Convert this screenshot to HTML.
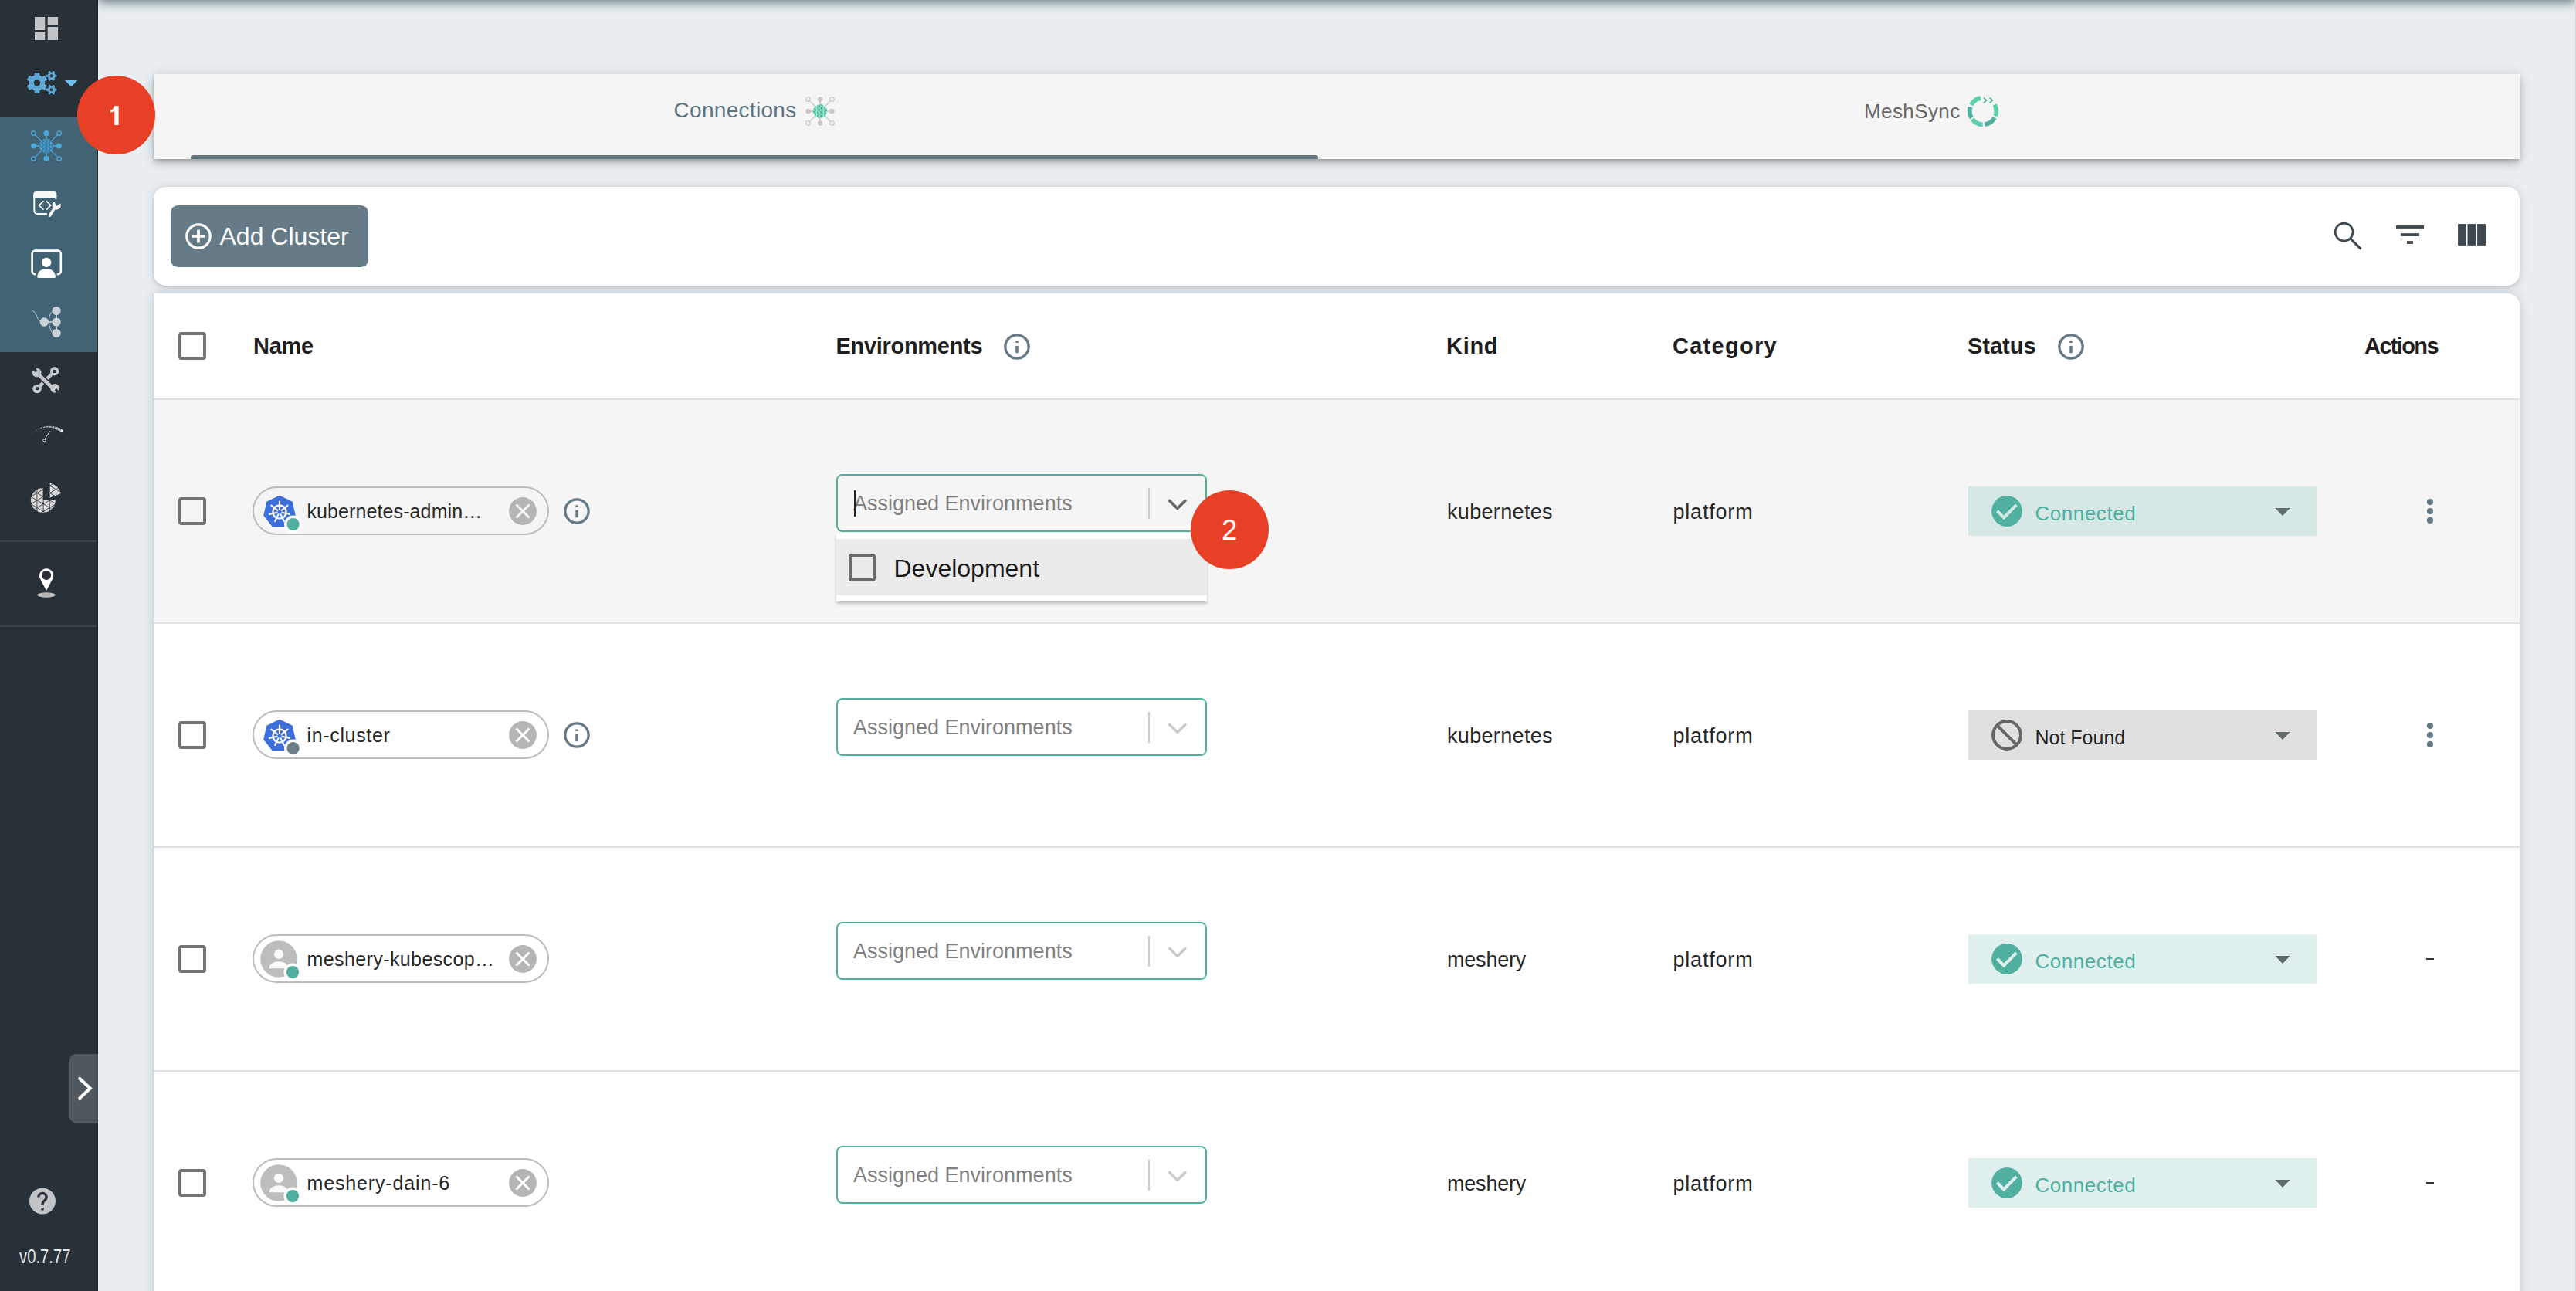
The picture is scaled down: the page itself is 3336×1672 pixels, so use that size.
<!DOCTYPE html>
<html><head><meta charset="utf-8">
<style>
*{box-sizing:border-box;margin:0;padding:0}
html,body{width:3336px;height:1672px;overflow:hidden}
body{background:#e8eef1;font-family:"Liberation Sans",sans-serif;position:relative}
.abs{position:absolute}
.t{position:absolute;line-height:1;white-space:nowrap}
#sidebar{position:absolute;left:0;top:0;width:127px;height:1672px;background:#283038;border-right:2px solid #202830}
#active{position:absolute;left:0;top:152px;width:125px;height:304px;background:#416373}
.sep{position:absolute;left:0;width:125px;height:2px;background:#3a434b}
#appbar{position:absolute;left:127px;top:-40px;width:3209px;height:40px;box-shadow:0 3px 14px rgba(25,45,60,.62)}
.card{position:absolute;left:199px;width:3064px;background:#fff}
#tabs{top:96px;height:110px;background:#f5f5f5;box-shadow:0px 3px 5px -1px rgba(0,0,0,0.2),0px 6px 10px 0px rgba(0,0,0,0.14),0px 1px 18px 0px rgba(0,0,0,0.12)}
#toolbar{top:242px;height:128px;border-radius:16px;box-shadow:0px 2px 4px -1px rgba(0,0,0,0.15),0px 1px 14px 0px rgba(0,0,0,0.14)}
#table{top:380px;height:1400px;border-radius:0 16px 0 0;box-shadow:0px 1px 16px 0px rgba(0,0,0,0.17)}
.badge{position:absolute;width:101px;height:101px;border-radius:50%;background:#e84026}
.line{position:absolute;left:199px;width:3064px;height:2px;background:#e0e0e0}
.cb{position:absolute;border-radius:4px}
.chip{position:absolute;left:327px;width:383.6px;height:63px;border:2px solid #bcbcbc;border-radius:32px}
.sel{position:absolute;left:1083px;width:479.5px;height:75.5px;border:2px solid #50b09e;border-radius:8px}
.status{position:absolute;left:2549px;width:451px;height:63.6px}
#rborder{position:absolute;left:3335px;top:0;width:1px;height:1672px;background:#d9d9d9}
</style></head>
<body>
<div id="appbar"></div>
<div id="rborder"></div>
<div id="sidebar"><div id="active"></div><div class="sep" style="top:700px"></div><div class="sep" style="top:810px"></div></div>
<svg class="abs" style="left:0;top:0" width="127" height="1672" viewBox="0 0 127 1672">
<!-- dashboard -->
<g fill="#c2c5c8"><rect x="45" y="22" width="13.2" height="17"/><rect x="45" y="42" width="13.2" height="10"/><rect x="61.7" y="22" width="13.4" height="10.1"/><rect x="61.7" y="35" width="13.4" height="17"/></g>
<!-- gears -->
<g fill="#5fa8d3"><circle cx="48" cy="107.3" r="10.4"/><rect x="44.60" y="93.90" width="6.8" height="13.40" rx="0.6" transform="rotate(0.0 48 107.3)"/><rect x="44.60" y="93.90" width="6.8" height="13.40" rx="0.6" transform="rotate(60.0 48 107.3)"/><rect x="44.60" y="93.90" width="6.8" height="13.40" rx="0.6" transform="rotate(120.0 48 107.3)"/><rect x="44.60" y="93.90" width="6.8" height="13.40" rx="0.6" transform="rotate(180.0 48 107.3)"/><rect x="44.60" y="93.90" width="6.8" height="13.40" rx="0.6" transform="rotate(240.0 48 107.3)"/><rect x="44.60" y="93.90" width="6.8" height="13.40" rx="0.6" transform="rotate(300.0 48 107.3)"/></g><circle cx="48" cy="107.3" r="4.1" fill="#283038"/><g fill="#5fa8d3"><circle cx="66.7" cy="98.3" r="5.0"/><rect x="65.10" y="91.60" width="3.2" height="6.70" rx="0.6" transform="rotate(30.0 66.7 98.3)"/><rect x="65.10" y="91.60" width="3.2" height="6.70" rx="0.6" transform="rotate(90.0 66.7 98.3)"/><rect x="65.10" y="91.60" width="3.2" height="6.70" rx="0.6" transform="rotate(150.0 66.7 98.3)"/><rect x="65.10" y="91.60" width="3.2" height="6.70" rx="0.6" transform="rotate(210.0 66.7 98.3)"/><rect x="65.10" y="91.60" width="3.2" height="6.70" rx="0.6" transform="rotate(270.0 66.7 98.3)"/><rect x="65.10" y="91.60" width="3.2" height="6.70" rx="0.6" transform="rotate(330.0 66.7 98.3)"/></g><circle cx="66.7" cy="98.3" r="2.0" fill="#283038"/><g fill="#5fa8d3"><circle cx="66.7" cy="116.2" r="5.0"/><rect x="65.10" y="109.50" width="3.2" height="6.70" rx="0.6" transform="rotate(30.0 66.7 116.2)"/><rect x="65.10" y="109.50" width="3.2" height="6.70" rx="0.6" transform="rotate(90.0 66.7 116.2)"/><rect x="65.10" y="109.50" width="3.2" height="6.70" rx="0.6" transform="rotate(150.0 66.7 116.2)"/><rect x="65.10" y="109.50" width="3.2" height="6.70" rx="0.6" transform="rotate(210.0 66.7 116.2)"/><rect x="65.10" y="109.50" width="3.2" height="6.70" rx="0.6" transform="rotate(270.0 66.7 116.2)"/><rect x="65.10" y="109.50" width="3.2" height="6.70" rx="0.6" transform="rotate(330.0 66.7 116.2)"/></g><circle cx="66.7" cy="116.2" r="2.0" fill="#283038"/>
<polygon points="84,104 100.4,104 92.2,112.4" fill="#6ec0f0"/>
<!-- connections active -->
<g stroke="#4aa8dc" fill="none">
<line x1="60" y1="189" x2="60" y2="173" stroke-width="1.7"/><line x1="60" y1="189" x2="60" y2="205" stroke-width="1.7"/>
<line x1="60" y1="189" x2="44" y2="189" stroke-width="1.7"/><line x1="60" y1="189" x2="76" y2="189" stroke-width="1.7"/>
<line x1="45.4" y1="174.6" x2="74.6" y2="203.4" stroke-width="1.3"/><line x1="74.6" y1="174.6" x2="45.4" y2="203.4" stroke-width="1.3"/>
<circle cx="43.3" cy="172.5" r="2.7" stroke-width="1.3"/><circle cx="76.7" cy="172.5" r="2.7" stroke-width="1.3"/>
<circle cx="43.3" cy="205.5" r="2.7" stroke-width="1.3"/><circle cx="76.7" cy="205.5" r="2.7" stroke-width="1.3"/>
</g>
<g fill="#4aa8dc"><circle cx="60" cy="189" r="9.2"/><circle cx="60" cy="172.7" r="3.6"/><circle cx="60" cy="205.3" r="3.6"/><circle cx="43.7" cy="189" r="3.6"/><circle cx="76.3" cy="189" r="3.6"/></g>
<clipPath id="ballclip2"><circle cx="60" cy="189" r="9.2"/></clipPath><g clip-path="url(#ballclip2)"><circle cx="60" cy="189" r="9.2" fill="#4aa8dc"/><path d="M50.50,172.75 L55.60,175.25 L50.50,177.75ZM50.50,177.75 L55.60,180.25 L50.50,182.75ZM50.50,182.75 L55.60,185.25 L50.50,187.75ZM50.50,187.75 L55.60,190.25 L50.50,192.75ZM50.50,192.75 L55.60,195.25 L50.50,197.75ZM50.50,197.75 L55.60,200.25 L50.50,202.75ZM50.50,202.75 L55.60,205.25 L50.50,207.75ZM60.00,175.25 L55.60,177.75 L60.00,180.25ZM60.00,180.25 L55.60,182.75 L60.00,185.25ZM60.00,185.25 L55.60,187.75 L60.00,190.25ZM60.00,190.25 L55.60,192.75 L60.00,195.25ZM60.00,195.25 L55.60,197.75 L60.00,200.25ZM60.00,200.25 L55.60,202.75 L60.00,205.25ZM60.00,205.25 L55.60,207.75 L60.00,210.25ZM60.00,172.75 L64.40,175.25 L60.00,177.75ZM60.00,177.75 L64.40,180.25 L60.00,182.75ZM60.00,182.75 L64.40,185.25 L60.00,187.75ZM60.00,187.75 L64.40,190.25 L60.00,192.75ZM60.00,192.75 L64.40,195.25 L60.00,197.75ZM60.00,197.75 L64.40,200.25 L60.00,202.75ZM60.00,202.75 L64.40,205.25 L60.00,207.75ZM69.50,175.25 L64.40,177.75 L69.50,180.25ZM69.50,180.25 L64.40,182.75 L69.50,185.25ZM69.50,185.25 L64.40,187.75 L69.50,190.25ZM69.50,190.25 L64.40,192.75 L69.50,195.25ZM69.50,195.25 L64.40,197.75 L69.50,200.25ZM69.50,200.25 L64.40,202.75 L69.50,205.25ZM69.50,205.25 L64.40,207.75 L69.50,210.25Z" fill="#3e94c6"/><path d="M50.50,172.75 L55.60,175.25 L50.50,177.75M50.50,177.75 L55.60,180.25 L50.50,182.75M50.50,182.75 L55.60,185.25 L50.50,187.75M50.50,187.75 L55.60,190.25 L50.50,192.75M50.50,192.75 L55.60,195.25 L50.50,197.75M50.50,197.75 L55.60,200.25 L50.50,202.75M50.50,202.75 L55.60,205.25 L50.50,207.75M60.00,175.25 L55.60,177.75 L60.00,180.25M60.00,180.25 L55.60,182.75 L60.00,185.25M60.00,185.25 L55.60,187.75 L60.00,190.25M60.00,190.25 L55.60,192.75 L60.00,195.25M60.00,195.25 L55.60,197.75 L60.00,200.25M60.00,200.25 L55.60,202.75 L60.00,205.25M60.00,205.25 L55.60,207.75 L60.00,210.25M60.00,172.75 L64.40,175.25 L60.00,177.75M60.00,177.75 L64.40,180.25 L60.00,182.75M60.00,182.75 L64.40,185.25 L60.00,187.75M60.00,187.75 L64.40,190.25 L60.00,192.75M60.00,192.75 L64.40,195.25 L60.00,197.75M60.00,197.75 L64.40,200.25 L60.00,202.75M60.00,202.75 L64.40,205.25 L60.00,207.75M69.50,175.25 L64.40,177.75 L69.50,180.25M69.50,180.25 L64.40,182.75 L69.50,185.25M69.50,185.25 L64.40,187.75 L69.50,190.25M69.50,190.25 L64.40,192.75 L69.50,195.25M69.50,195.25 L64.40,197.75 L69.50,200.25M69.50,200.25 L64.40,202.75 L69.50,205.25M69.50,205.25 L64.40,207.75 L69.50,210.25M55.60,179.80 V198.20M60.00,179.80 V198.20M64.40,179.80 V198.20" stroke="#3f6478" stroke-width="0.6" fill="none"/></g>
<!-- code window -->
<g stroke="#f8f8f8" fill="none" stroke-width="2">
<path d="M61,277 H48 A3.7,3.7 0 0 1 44.3,273.3 V252"/><path d="M72.3,252 V258"/>
<polyline points="56.5,260.3 50.5,266 56.5,271.6" stroke-width="1.7"/><polyline points="60.3,260.3 65.6,266 60.3,271.6" stroke-width="1.7"/>
</g>
<path d="M43.3,256 V251.7 A3.7,3.7 0 0 1 47,248 H69.6 A3.7,3.7 0 0 1 73.3,251.7 V256 Z" fill="#f8f8f8"/>
<g fill="#f8f8f8"><line x1="64.6" y1="279" x2="70.8" y2="269" stroke="#f8f8f8" stroke-width="3.6" stroke-linecap="round"/><circle cx="73.2" cy="266" r="5.6"/></g>
<path d="M70.9,259.4 L78.9,262.2 L72.9,266.4 Z" fill="#416373" stroke="#416373" stroke-width="1.2" stroke-linejoin="round"/>
<!-- presenter -->
<path d="M46.3,355.1 H45.4 A3.8,3.8 0 0 1 41.6,351.3 V328.6 A4,4 0 0 1 45.6,324.6 H74.8 A4,4 0 0 1 78.8,328.6 V351.3 A3.8,3.8 0 0 1 75,355.1 H73.8" stroke="#fff" stroke-width="2.6" fill="none"/>
<circle cx="60.1" cy="339.9" r="6.2" fill="#fff"/>
<path d="M48.3,359 C48.3,352 53,347.9 60.1,347.9 C67.2,347.9 71.9,352 71.9,359 Q71.9,360.1 70.8,360.1 H49.4 Q48.3,360.1 48.3,359 Z" fill="#fff" stroke="#416373" stroke-width="2.4" paint-order="stroke"/>
<!-- graph -->
<g fill="#c9d2d8"><circle cx="57.3" cy="417" r="5.7"/><circle cx="73.1" cy="402.5" r="5.6"/><circle cx="73.1" cy="417" r="5.6"/><circle cx="73.1" cy="431.5" r="5.6"/></g>
<g stroke="#c9d2d8" fill="none"><line x1="73.1" y1="403" x2="73.1" y2="431" stroke-width="1.6"/><line x1="57.3" y1="417" x2="73" y2="417" stroke-width="1.6"/>
<path d="M67.6,403.2 Q63,408 63.5,417 Q64,426 67.6,430.5" stroke-width="0.9"/><path d="M41.2,401.9 Q44.5,402.5 47,408 Q49.5,414.5 51.8,416.4" stroke-width="0.9"/></g>
<!-- tools -->
<g fill="#c4c7ca">
<line x1="70.6" y1="480.7" x2="48" y2="503.6" stroke="#c4c7ca" stroke-width="4.4"/>
<circle cx="70.6" cy="480.7" r="5.7"/><circle cx="48" cy="503.6" r="5.7"/>
</g>
<g fill="#283038"><circle cx="70.3" cy="481" r="2.2"/><circle cx="48.2" cy="503.3" r="2.2"/></g>
<line x1="50" y1="485" x2="68.6" y2="503" stroke="#283038" stroke-width="7.4"/>
<g fill="#c4c7ca">
<line x1="50" y1="485" x2="68.6" y2="503" stroke="#c4c7ca" stroke-width="4.6"/>
<circle cx="47.6" cy="482.6" r="5.9"/><circle cx="71" cy="502.8" r="5.9"/>
</g>
<g fill="#283038"><path d="M41.5,478 L45.5,474 L48,480.5 L46,482.5 Z"/><path d="M77.5,507.5 L73.5,511.5 L71,505 L73,503 Z"/></g>
<!-- gauge -->
<path d="M39.60,563.50 A30.07,30.07 0 0 1 41.66,561.27" stroke="#dcdcdc" stroke-opacity="0.25" stroke-width="0.50" fill="none"/><path d="M42.28,560.68 A30.07,30.07 0 0 1 44.60,558.74" stroke="#dcdcdc" stroke-opacity="0.32" stroke-width="0.57" fill="none"/><path d="M45.29,558.24 A30.07,30.07 0 0 1 47.85,556.61" stroke="#dcdcdc" stroke-opacity="0.39" stroke-width="0.71" fill="none"/><path d="M48.60,556.20 A30.07,30.07 0 0 1 51.35,554.91" stroke="#dcdcdc" stroke-opacity="0.45" stroke-width="0.90" fill="none"/><path d="M52.14,554.60 A30.07,30.07 0 0 1 55.03,553.68" stroke="#dcdcdc" stroke-opacity="0.52" stroke-width="1.13" fill="none"/><path d="M55.86,553.48 A30.07,30.07 0 0 1 58.84,552.94" stroke="#dcdcdc" stroke-opacity="0.59" stroke-width="1.41" fill="none"/><path d="M59.69,552.84 A30.07,30.07 0 0 1 62.72,552.69" stroke="#dcdcdc" stroke-opacity="0.66" stroke-width="1.71" fill="none"/><path d="M63.57,552.71 A30.07,30.07 0 0 1 66.60,552.95" stroke="#dcdcdc" stroke-opacity="0.73" stroke-width="2.05" fill="none"/><path d="M67.44,553.07 A30.07,30.07 0 0 1 70.41,553.70" stroke="#dcdcdc" stroke-opacity="0.80" stroke-width="2.42" fill="none"/><path d="M71.23,553.93 A30.07,30.07 0 0 1 74.59,555.15" stroke="#dcdcdc" stroke-opacity="0.86" stroke-width="2.82" fill="none"/><path d="M74.88,555.27 A30.07,30.07 0 0 1 78.05,556.91" stroke="#dcdcdc" stroke-opacity="0.93" stroke-width="3.25" fill="none"/><path d="M78.32,557.07 A30.07,30.07 0 0 1 81.26,559.11" stroke="#dcdcdc" stroke-opacity="1.00" stroke-width="3.70" fill="none"/>
<line x1="57.6" y1="569.6" x2="64.6" y2="558.3" stroke="#d8d8d8" stroke-width="1"/>
<circle cx="57.4" cy="570.2" r="1.7" stroke="#d8d8d8" stroke-width="1" fill="none"/>
<!-- pie -->
<clipPath id="pieclip"><path d="M55.8,648 V632 A16,16 0 1 0 71.8,648 Z"/><path d="M63,645 V625.3 A20,20 0 0 1 79.2,639 Z"/></clipPath><g clip-path="url(#pieclip)"><rect x="35" y="620" width="50" height="50" fill="#dadada"/><path d="M23.30,620V670M31.50,620V670M39.70,620V670M47.90,620V670M56.10,620V670M64.30,620V670M72.50,620V670M80.70,620V670M35,564.80L85,593.67M35,579.70L85,550.83M35,574.27L85,603.14M35,589.17L85,560.30M35,583.74L85,612.61M35,598.64L85,569.77M35,593.21L85,622.08M35,608.11L85,579.24M35,602.68L85,631.55M35,617.57L85,588.71M35,612.15L85,641.01M35,627.04L85,598.17M35,621.62L85,650.48M35,636.51L85,607.64M35,631.08L85,659.95M35,645.98L85,617.11M35,640.55L85,669.42M35,655.45L85,626.58M35,650.02L85,678.89M35,664.92L85,636.05M35,659.49L85,688.36M35,674.38L85,645.52M35,668.96L85,697.83M35,683.85L85,654.99M35,678.43L85,707.29M35,693.32L85,664.45M35,687.89L85,716.76M35,702.79L85,673.92M35,697.36L85,726.23M35,712.26L85,683.39M35,706.83L85,735.70M35,721.73L85,692.86M35,716.30L85,745.17M35,731.20L85,702.33" stroke="#283038" stroke-width="0.8" fill="none"/></g>
<!-- separators drawn as divs -->
<!-- pin -->
<path fill="#fff" fill-rule="evenodd" d="M60.1,765 L51.9,749.3 A9.1,9.1 0 1 1 68.3,749.3 Z M66.1,744.9 A6,6 0 1 0 54.1,744.9 A6,6 0 1 0 66.1,744.9 Z"/>
<ellipse cx="60" cy="770.5" rx="12" ry="3.2" fill="#b8b8b8"/>
<!-- collapse -->
<path d="M127,1365 H98 A8,8 0 0 0 90,1373 V1446 A8,8 0 0 0 98,1454 H127 Z" fill="#50585f"/>
<polyline points="103.3,1397 116.8,1409.6 103.3,1422.2" stroke="#fff" stroke-width="4.1" fill="none" stroke-linecap="round" stroke-linejoin="miter"/>
<!-- help -->
<g transform="translate(34.6,1535.2) scale(1.7)"><circle cx="12" cy="12" r="10" fill="#c2c5c8"/><path fill="#283038" d="M13 19h-2v-2h2v2zm2.07-7.75l-.9.92C13.45 12.9 13 13.5 13 15h-2v-.5c0-1.1.45-2.1 1.17-2.830l1.240-1.260c.37-.36.59-.86.59-1.41 0-1.1-.9-2-2-2s-2 .9-2 2H8c0-2.21 1.79-4 4-4s4 1.79 4 4c0 .88-.36 1.68-.93 2.25z"/></g>
</svg>
<div class="t" style="left:24.5px;top:1615.1px;font-size:25px;color:#e6e6e6;transform:scaleX(0.81);transform-origin:0 0;">v0.7.77</div>
<div id="tabs" class="card"></div>
<div class="abs" style="left:246.5px;top:200.5px;width:1460.5px;height:5.5px;background:#647881;border-radius:3px 3px 0 0"></div>
<div class="t" style="left:872.5px;top:129.2px;font-size:28px;color:#5b7480;letter-spacing:0.3px;">Connections</div>
<svg class="abs" style="left:1040px;top:122px" width="44" height="44" viewBox="-22 -22 44 44"><g stroke="#c8c8c8" fill="none"><line x1="0" y1="-15" x2="0" y2="15" stroke-width="1.6"/><line x1="-15" y1="0" x2="15" y2="0" stroke-width="1.6"/><line x1="-13.5" y1="-13.5" x2="13.5" y2="13.5" stroke-width="1.1"/><line x1="13.5" y1="-13.5" x2="-13.5" y2="13.5" stroke-width="1.1"/><circle cx="-15.5" cy="-15.5" r="2.8" stroke-width="1.1" fill="#f4f4f4"/><circle cx="-15.5" cy="15.5" r="2.8" stroke-width="1.1" fill="#f4f4f4"/><circle cx="15.5" cy="-15.5" r="2.8" stroke-width="1.1" fill="#f4f4f4"/><circle cx="15.5" cy="15.5" r="2.8" stroke-width="1.1" fill="#f4f4f4"/></g><g fill="#c8c8c8"><circle cx="0" cy="-15.4" r="3.3"/><circle cx="0" cy="15.4" r="3.3"/><circle cx="-15.4" cy="0" r="3.3"/><circle cx="15.4" cy="0" r="3.3"/></g><clipPath id="ballclip1"><circle cx="0" cy="0" r="8.9"/></clipPath><g clip-path="url(#ballclip1)"><circle cx="0" cy="0" r="8.9" fill="#52cba3"/><path d="M-9.50,-16.25 L-4.40,-13.75 L-9.50,-11.25ZM-9.50,-11.25 L-4.40,-8.75 L-9.50,-6.25ZM-9.50,-6.25 L-4.40,-3.75 L-9.50,-1.25ZM-9.50,-1.25 L-4.40,1.25 L-9.50,3.75ZM-9.50,3.75 L-4.40,6.25 L-9.50,8.75ZM-9.50,8.75 L-4.40,11.25 L-9.50,13.75ZM-9.50,13.75 L-4.40,16.25 L-9.50,18.75ZM0.00,-13.75 L-4.40,-11.25 L0.00,-8.75ZM0.00,-8.75 L-4.40,-6.25 L0.00,-3.75ZM0.00,-3.75 L-4.40,-1.25 L0.00,1.25ZM0.00,1.25 L-4.40,3.75 L0.00,6.25ZM0.00,6.25 L-4.40,8.75 L0.00,11.25ZM0.00,11.25 L-4.40,13.75 L0.00,16.25ZM0.00,16.25 L-4.40,18.75 L0.00,21.25ZM0.00,-16.25 L4.40,-13.75 L0.00,-11.25ZM0.00,-11.25 L4.40,-8.75 L0.00,-6.25ZM0.00,-6.25 L4.40,-3.75 L0.00,-1.25ZM0.00,-1.25 L4.40,1.25 L0.00,3.75ZM0.00,3.75 L4.40,6.25 L0.00,8.75ZM0.00,8.75 L4.40,11.25 L0.00,13.75ZM0.00,13.75 L4.40,16.25 L0.00,18.75ZM9.50,-13.75 L4.40,-11.25 L9.50,-8.75ZM9.50,-8.75 L4.40,-6.25 L9.50,-3.75ZM9.50,-3.75 L4.40,-1.25 L9.50,1.25ZM9.50,1.25 L4.40,3.75 L9.50,6.25ZM9.50,6.25 L4.40,8.75 L9.50,11.25ZM9.50,11.25 L4.40,13.75 L9.50,16.25ZM9.50,16.25 L4.40,18.75 L9.50,21.25Z" fill="#3fae96"/><path d="M-9.50,-16.25 L-4.40,-13.75 L-9.50,-11.25M-9.50,-11.25 L-4.40,-8.75 L-9.50,-6.25M-9.50,-6.25 L-4.40,-3.75 L-9.50,-1.25M-9.50,-1.25 L-4.40,1.25 L-9.50,3.75M-9.50,3.75 L-4.40,6.25 L-9.50,8.75M-9.50,8.75 L-4.40,11.25 L-9.50,13.75M-9.50,13.75 L-4.40,16.25 L-9.50,18.75M0.00,-13.75 L-4.40,-11.25 L0.00,-8.75M0.00,-8.75 L-4.40,-6.25 L0.00,-3.75M0.00,-3.75 L-4.40,-1.25 L0.00,1.25M0.00,1.25 L-4.40,3.75 L0.00,6.25M0.00,6.25 L-4.40,8.75 L0.00,11.25M0.00,11.25 L-4.40,13.75 L0.00,16.25M0.00,16.25 L-4.40,18.75 L0.00,21.25M0.00,-16.25 L4.40,-13.75 L0.00,-11.25M0.00,-11.25 L4.40,-8.75 L0.00,-6.25M0.00,-6.25 L4.40,-3.75 L0.00,-1.25M0.00,-1.25 L4.40,1.25 L0.00,3.75M0.00,3.75 L4.40,6.25 L0.00,8.75M0.00,8.75 L4.40,11.25 L0.00,13.75M0.00,13.75 L4.40,16.25 L0.00,18.75M9.50,-13.75 L4.40,-11.25 L9.50,-8.75M9.50,-8.75 L4.40,-6.25 L9.50,-3.75M9.50,-3.75 L4.40,-1.25 L9.50,1.25M9.50,1.25 L4.40,3.75 L9.50,6.25M9.50,6.25 L4.40,8.75 L9.50,11.25M9.50,11.25 L4.40,13.75 L9.50,16.25M9.50,16.25 L4.40,18.75 L9.50,21.25M-4.40,-8.90 V8.90M0.00,-8.90 V8.90M4.40,-8.90 V8.90" stroke="#d8f2ea" stroke-width="0.55" fill="none"/></g></svg>
<div class="t" style="left:2414.0px;top:130.5px;font-size:26px;color:#666666;letter-spacing:0.4px;">MeshSync</div>
<svg class="abs" style="left:2546px;top:121.7px" width="44" height="44" viewBox="-22 -22 44 44"><g fill="none" stroke-width="5.8"><path d="M15.13,-8.39 A17.3,17.3 0 0 1 16.15,6.20" stroke="#5dcfac"/><path d="M15.13,8.39 A17.3,17.3 0 0 1 2.41,17.13" stroke="#4fb09f"/><path d="M-0.30,17.30 A17.3,17.3 0 0 1 -13.92,10.27" stroke="#5dcfac"/><path d="M-14.92,8.75 A17.3,17.3 0 0 1 -16.42,-5.46" stroke="#4fb09f"/><path d="M-15.27,-8.12 A17.3,17.3 0 0 1 -3.00,-17.04" stroke="#5dcfac"/></g><g stroke="#4fb09f" stroke-width="1.6" fill="none"><polyline points="0.8,-17.6 4.6,-14.1 0.8,-10.6"/><polyline points="8.6,-17.6 12.4,-14.1 8.6,-10.6"/></g></svg>
<div id="toolbar" class="card"></div>
<div class="abs" style="left:221px;top:266px;width:255.7px;height:79.7px;background:#657b87;border-radius:9.5px"></div>
<svg class="abs" style="left:236.9px;top:285.8px" width="40" height="40" viewBox="-20 -20 40 40"><circle r="15.2" stroke="#fff" stroke-width="3.2" fill="none"/><path d="M-8.4,0 H8.4 M0,-8.4 V8.4" stroke="#fff" stroke-width="3.7"/></svg>
<div class="t" style="left:284.5px;top:289.9px;font-size:32px;color:#ffffff;">Add Cluster</div>
<svg class="abs" style="left:3015px;top:280px" width="210" height="50" viewBox="3015 280 210 50"><circle cx="3035.6" cy="300.6" r="11.5" stroke="#3d4850" stroke-width="2.7" fill="none"/><line x1="3043.6" y1="309" x2="3057.6" y2="322.6" stroke="#3d4850" stroke-width="3.1"/><rect x="3103" y="292.1" width="36" height="3.8" fill="#3d4850"/><rect x="3109" y="302.2" width="24" height="3.8" fill="#3d4850"/><rect x="3117" y="312.1" width="8" height="3.8" fill="#3d4850"/><rect x="3183.1" y="290.1" width="10.7" height="27.8" fill="#3d4850"/><rect x="3195.5" y="290.1" width="10.7" height="27.8" fill="#3d4850"/><rect x="3208.1" y="290.1" width="10.9" height="27.8" fill="#3d4850"/></svg>
<div id="table" class="card"></div>
<div class="cb" style="left:231.3px;top:430.2px;width:35.3px;height:35.7px;border:4px solid #737373"></div>
<div class="t" style="left:328.0px;top:434.3px;font-size:29px;color:#1e1e1e;font-weight:bold;letter-spacing:-0.3px;">Name</div>
<div class="t" style="left:1082.5px;top:434.3px;font-size:29px;color:#1e1e1e;font-weight:bold;letter-spacing:-0.3px;">Environments</div>
<div class="t" style="left:1873.0px;top:434.3px;font-size:29px;color:#1e1e1e;font-weight:bold;letter-spacing:0.7px;">Kind</div>
<div class="t" style="left:2165.9px;top:434.3px;font-size:29px;color:#1e1e1e;font-weight:bold;letter-spacing:1.3px;">Category</div>
<div class="t" style="left:2547.9px;top:434.3px;font-size:29px;color:#1e1e1e;font-weight:bold;">Status</div>
<div class="t" style="left:3062.1px;top:434.3px;font-size:29px;color:#1e1e1e;font-weight:bold;letter-spacing:-1.65px;">Actions</div>
<svg class="abs" style="left:1297.3px;top:428.9px" width="40" height="40" viewBox="-20 -20 40 40"><circle r="15.15" stroke="#647a86" stroke-width="3.3" fill="none"/><rect x="-1.75" y="-7.6" width="3.5" height="2.6" fill="#647a86"/><rect x="-1.75" y="-1.1" width="3.5" height="9.3" fill="#647a86"/></svg>
<svg class="abs" style="left:2662.2px;top:428.7px" width="40" height="40" viewBox="-20 -20 40 40"><circle r="15.15" stroke="#647a86" stroke-width="3.3" fill="none"/><rect x="-1.75" y="-7.6" width="3.5" height="2.6" fill="#647a86"/><rect x="-1.75" y="-1.1" width="3.5" height="9.3" fill="#647a86"/></svg>
<div class="abs" style="left:199px;top:518.0px;width:3064px;height:288.0px;background:#f5f5f5"></div>
<div class="line" style="top:516.0px"></div>
<div class="cb" style="left:231.3px;top:644.0px;width:35.3px;height:35.7px;border:4px solid #737373"></div>
<div class="chip" style="top:630.3px"></div>
<svg class="abs" style="left:331.5px;top:632.8px" width="60" height="60" viewBox="-30 -30 60 60"><polygon points="0.00,-22.00 17.20,-13.72 21.45,4.90 9.55,19.82 -9.55,19.82 -21.45,4.90 -17.20,-13.72" fill="#3d6fdc" stroke="#fff" stroke-width="1.2" stroke-linejoin="round"/><g stroke="#fff" stroke-width="2.1" stroke-linecap="round"><line x1="0" y1="0" x2="0.00" y2="-13.50"/><line x1="0" y1="0" x2="10.55" y2="-8.42"/><line x1="0" y1="0" x2="13.16" y2="3.00"/><line x1="0" y1="0" x2="5.86" y2="12.16"/><line x1="0" y1="0" x2="-5.86" y2="12.16"/><line x1="0" y1="0" x2="-13.16" y2="3.00"/><line x1="0" y1="0" x2="-10.55" y2="-8.42"/></g><circle r="8.6" stroke="#fff" stroke-width="2.3" fill="none"/><circle r="2.6" fill="#3d6fdc"/><circle cx="17.6" cy="16.1" r="11.6" fill="#fff"/><circle cx="17.6" cy="16.1" r="8.1" fill="#4fb09f"/></svg>
<div class="t" style="left:397.5px;top:649.7px;font-size:25px;color:#262626;letter-spacing:0.1px;">kubernetes-admin…</div>
<svg class="abs" style="left:657.0px;top:641.8px" width="40" height="40" viewBox="-20 -20 40 40"><circle r="17.9" fill="#b5b5b5"/><path d="M-8.5,-8.5 L8.5,8.5 M8.5,-8.5 L-8.5,8.5" stroke="#f5f5f5" stroke-width="3.1"/></svg>
<svg class="abs" style="left:726.8px;top:641.8px" width="40" height="40" viewBox="-20 -20 40 40"><circle r="15.15" stroke="#647a86" stroke-width="3.3" fill="none"/><rect x="-1.75" y="-7.6" width="3.5" height="2.6" fill="#647a86"/><rect x="-1.75" y="-1.1" width="3.5" height="9.3" fill="#647a86"/></svg>
<div class="sel" style="top:613.5px"></div>
<div class="t" style="left:1105.0px;top:639.1px;font-size:27px;color:#808080;">Assigned Environments</div>
<div class="abs" style="left:1487.4px;top:632.0px;width:1.3px;height:39.6px;background:#cccccc"></div>
<svg class="abs" style="left:1505px;top:635.8px" width="40" height="30" viewBox="0 0 40 30"><polyline points="9.7,12.4 19.8,22.5 29.9,12.4" stroke="#666666" stroke-width="3.6" fill="none" stroke-linecap="round" stroke-linejoin="round"/></svg>
<div class="t" style="left:1874.0px;top:650.0px;font-size:27px;color:#262626;letter-spacing:0.33px;">kubernetes</div>
<div class="t" style="left:2166.5px;top:650.0px;font-size:27px;color:#262626;letter-spacing:0.8px;">platform</div>
<div class="status" style="top:630.1px;background:#d5e8e6"></div>
<svg class="abs" style="left:2578px;top:640.8px" width="42" height="42" viewBox="-21 -21 42 42"><circle r="19.9" fill="#51b1a0"/><polyline points="-12.6,-0.4 -3.9,8.3 12.3,-8.1" stroke="#d5e8e6" stroke-width="4" fill="none"/></svg>
<div class="t" style="left:2635.5px;top:651.6px;font-size:26px;color:#4fb09f;letter-spacing:0.55px;">Connected</div>
<svg class="abs" style="left:2940px;top:651.8px" width="32" height="20" viewBox="0 0 32 20"><polygon points="6.3,6 25.8,6 16,15.9" fill="#626b6b"/></svg>
<svg class="abs" style="left:3137px;top:639.8px" width="20" height="44" viewBox="-10 -22 20 44" fill="#647a86"><circle cy="-11.9" r="4.1"/><circle cy="0" r="4.1"/><circle cy="11.9" r="4.1"/></svg>
<div class="line" style="top:806.0px"></div>
<div class="cb" style="left:231.3px;top:934.0px;width:35.3px;height:35.7px;border:4px solid #737373"></div>
<div class="chip" style="top:920.3px"></div>
<svg class="abs" style="left:331.5px;top:922.8px" width="60" height="60" viewBox="-30 -30 60 60"><polygon points="0.00,-22.00 17.20,-13.72 21.45,4.90 9.55,19.82 -9.55,19.82 -21.45,4.90 -17.20,-13.72" fill="#3d6fdc" stroke="#fff" stroke-width="1.2" stroke-linejoin="round"/><g stroke="#fff" stroke-width="2.1" stroke-linecap="round"><line x1="0" y1="0" x2="0.00" y2="-13.50"/><line x1="0" y1="0" x2="10.55" y2="-8.42"/><line x1="0" y1="0" x2="13.16" y2="3.00"/><line x1="0" y1="0" x2="5.86" y2="12.16"/><line x1="0" y1="0" x2="-5.86" y2="12.16"/><line x1="0" y1="0" x2="-13.16" y2="3.00"/><line x1="0" y1="0" x2="-10.55" y2="-8.42"/></g><circle r="8.6" stroke="#fff" stroke-width="2.3" fill="none"/><circle r="2.6" fill="#3d6fdc"/><circle cx="17.6" cy="16.1" r="11.6" fill="#fff"/><circle cx="17.6" cy="16.1" r="8.1" fill="#6b7d87"/></svg>
<div class="t" style="left:397.5px;top:939.7px;font-size:25px;color:#262626;letter-spacing:0.65px;">in-cluster</div>
<svg class="abs" style="left:657.0px;top:931.8px" width="40" height="40" viewBox="-20 -20 40 40"><circle r="17.9" fill="#b5b5b5"/><path d="M-8.5,-8.5 L8.5,8.5 M8.5,-8.5 L-8.5,8.5" stroke="#ffffff" stroke-width="3.1"/></svg>
<svg class="abs" style="left:726.8px;top:931.8px" width="40" height="40" viewBox="-20 -20 40 40"><circle r="15.15" stroke="#647a86" stroke-width="3.3" fill="none"/><rect x="-1.75" y="-7.6" width="3.5" height="2.6" fill="#647a86"/><rect x="-1.75" y="-1.1" width="3.5" height="9.3" fill="#647a86"/></svg>
<div class="sel" style="top:903.5px"></div>
<div class="t" style="left:1105.0px;top:929.1px;font-size:27px;color:#808080;">Assigned Environments</div>
<div class="abs" style="left:1487.4px;top:922.0px;width:1.3px;height:39.6px;background:#cccccc"></div>
<svg class="abs" style="left:1505px;top:925.8px" width="40" height="30" viewBox="0 0 40 30"><polyline points="9.7,12.4 19.8,22.5 29.9,12.4" stroke="#cccccc" stroke-width="3.6" fill="none" stroke-linecap="round" stroke-linejoin="round"/></svg>
<div class="t" style="left:1874.0px;top:940.0px;font-size:27px;color:#262626;letter-spacing:0.33px;">kubernetes</div>
<div class="t" style="left:2166.5px;top:940.0px;font-size:27px;color:#262626;letter-spacing:0.8px;">platform</div>
<div class="status" style="top:920.1px;background:#e0e0e0"></div>
<svg class="abs" style="left:2578px;top:930.8px" width="42" height="42" viewBox="-21 -21 42 42"><circle r="17.9" stroke="#666" stroke-width="4" fill="none"/><line x1="-12.2" y1="-12.2" x2="12.2" y2="12.2" stroke="#666" stroke-width="4"/></svg>
<div class="t" style="left:2635.5px;top:942.6px;font-size:25px;color:#262626;">Not Found</div>
<svg class="abs" style="left:2940px;top:941.8px" width="32" height="20" viewBox="0 0 32 20"><polygon points="6.3,6 25.8,6 16,15.9" fill="#626b6b"/></svg>
<svg class="abs" style="left:3137px;top:929.8px" width="20" height="44" viewBox="-10 -22 20 44" fill="#647a86"><circle cy="-11.9" r="4.1"/><circle cy="0" r="4.1"/><circle cy="11.9" r="4.1"/></svg>
<div class="line" style="top:1096.0px"></div>
<div class="cb" style="left:231.3px;top:1224.0px;width:35.3px;height:35.7px;border:4px solid #737373"></div>
<div class="chip" style="top:1210.3px"></div>
<svg class="abs" style="left:331.0px;top:1211.9px" width="60" height="60" viewBox="-30 -30 60 60"><circle r="23.8" fill="#bdbdbd"/><circle cy="-6.1" r="6.1" fill="#fafafa"/><path d="M-12.2,12.2 C-12.2,6 -6,3.2 0,3.2 C6,3.2 12.2,6 12.2,12.2 Z" fill="#fafafa"/><circle cx="18" cy="17.1" r="11.6" fill="#fff"/><circle cx="18" cy="17.1" r="8.1" fill="#4fb09f"/></svg>
<div class="t" style="left:397.5px;top:1229.7px;font-size:25px;color:#262626;letter-spacing:0.4px;">meshery-kubescop…</div>
<svg class="abs" style="left:657.0px;top:1221.8px" width="40" height="40" viewBox="-20 -20 40 40"><circle r="17.9" fill="#b5b5b5"/><path d="M-8.5,-8.5 L8.5,8.5 M8.5,-8.5 L-8.5,8.5" stroke="#ffffff" stroke-width="3.1"/></svg>
<div class="sel" style="top:1193.5px"></div>
<div class="t" style="left:1105.0px;top:1219.1px;font-size:27px;color:#808080;">Assigned Environments</div>
<div class="abs" style="left:1487.4px;top:1212.0px;width:1.3px;height:39.6px;background:#cccccc"></div>
<svg class="abs" style="left:1505px;top:1215.8px" width="40" height="30" viewBox="0 0 40 30"><polyline points="9.7,12.4 19.8,22.5 29.9,12.4" stroke="#cccccc" stroke-width="3.6" fill="none" stroke-linecap="round" stroke-linejoin="round"/></svg>
<div class="t" style="left:1874.0px;top:1230.0px;font-size:27px;color:#262626;letter-spacing:-0.2px;">meshery</div>
<div class="t" style="left:2166.5px;top:1230.0px;font-size:27px;color:#262626;letter-spacing:0.8px;">platform</div>
<div class="status" style="top:1210.1px;background:#dff0ee"></div>
<svg class="abs" style="left:2578px;top:1220.8px" width="42" height="42" viewBox="-21 -21 42 42"><circle r="19.9" fill="#51b1a0"/><polyline points="-12.6,-0.4 -3.9,8.3 12.3,-8.1" stroke="#dff0ee" stroke-width="4" fill="none"/></svg>
<div class="t" style="left:2635.5px;top:1231.6px;font-size:26px;color:#4fb09f;letter-spacing:0.55px;">Connected</div>
<svg class="abs" style="left:2940px;top:1231.8px" width="32" height="20" viewBox="0 0 32 20"><polygon points="6.3,6 25.8,6 16,15.9" fill="#626b6b"/></svg>
<div class="abs" style="left:3141.5px;top:1240.8px;width:10px;height:2.2px;background:#333"></div>
<div class="line" style="top:1386.0px"></div>
<div class="cb" style="left:231.3px;top:1514.0px;width:35.3px;height:35.7px;border:4px solid #737373"></div>
<div class="chip" style="top:1500.3px"></div>
<svg class="abs" style="left:331.0px;top:1501.9px" width="60" height="60" viewBox="-30 -30 60 60"><circle r="23.8" fill="#bdbdbd"/><circle cy="-6.1" r="6.1" fill="#fafafa"/><path d="M-12.2,12.2 C-12.2,6 -6,3.2 0,3.2 C6,3.2 12.2,6 12.2,12.2 Z" fill="#fafafa"/><circle cx="18" cy="17.1" r="11.6" fill="#fff"/><circle cx="18" cy="17.1" r="8.1" fill="#4fb09f"/></svg>
<div class="t" style="left:397.5px;top:1519.7px;font-size:25px;color:#262626;letter-spacing:0.85px;">meshery-dain-6</div>
<svg class="abs" style="left:657.0px;top:1511.8px" width="40" height="40" viewBox="-20 -20 40 40"><circle r="17.9" fill="#b5b5b5"/><path d="M-8.5,-8.5 L8.5,8.5 M8.5,-8.5 L-8.5,8.5" stroke="#ffffff" stroke-width="3.1"/></svg>
<div class="sel" style="top:1483.5px"></div>
<div class="t" style="left:1105.0px;top:1509.1px;font-size:27px;color:#808080;">Assigned Environments</div>
<div class="abs" style="left:1487.4px;top:1502.0px;width:1.3px;height:39.6px;background:#cccccc"></div>
<svg class="abs" style="left:1505px;top:1505.8px" width="40" height="30" viewBox="0 0 40 30"><polyline points="9.7,12.4 19.8,22.5 29.9,12.4" stroke="#cccccc" stroke-width="3.6" fill="none" stroke-linecap="round" stroke-linejoin="round"/></svg>
<div class="t" style="left:1874.0px;top:1520.0px;font-size:27px;color:#262626;letter-spacing:-0.2px;">meshery</div>
<div class="t" style="left:2166.5px;top:1520.0px;font-size:27px;color:#262626;letter-spacing:0.8px;">platform</div>
<div class="status" style="top:1500.1px;background:#dff0ee"></div>
<svg class="abs" style="left:2578px;top:1510.8px" width="42" height="42" viewBox="-21 -21 42 42"><circle r="19.9" fill="#51b1a0"/><polyline points="-12.6,-0.4 -3.9,8.3 12.3,-8.1" stroke="#dff0ee" stroke-width="4" fill="none"/></svg>
<div class="t" style="left:2635.5px;top:1521.6px;font-size:26px;color:#4fb09f;letter-spacing:0.55px;">Connected</div>
<svg class="abs" style="left:2940px;top:1521.8px" width="32" height="20" viewBox="0 0 32 20"><polygon points="6.3,6 25.8,6 16,15.9" fill="#626b6b"/></svg>
<div class="abs" style="left:3141.5px;top:1530.8px;width:10px;height:2.2px;background:#333"></div>
<div class="abs" style="left:1083px;top:690.6px;width:480px;height:88.4px;background:#fff;box-shadow:0 3px 4px rgba(0,0,0,.22)"></div>
<div class="abs" style="left:1083px;top:698px;width:480px;height:73px;background:#ebebeb"></div>
<div class="cb" style="left:1099px;top:717.2px;width:35.3px;height:35.7px;border:4px solid #6b6b6b"></div>
<div class="t" style="left:1157.5px;top:720.4px;font-size:32px;color:#1a1a1a;">Development</div>
<div class="abs" style="left:1105.5px;top:635px;width:2px;height:33.5px;background:#222"></div>
<div class="badge" style="left:99.9px;top:97.9px;width:101.5px;height:101.8px"></div>
<svg class="abs" style="left:0;top:0" width="300" height="300" viewBox="0 0 300 300"><path d="M148.3,136.9 H153.6 V162 H148.3 V143.6 Q146.6,145.4 143,145.6 V142.5 Q146.9,141.9 148.3,136.9 Z" fill="#fff"/></svg>
<div class="badge" style="left:1541.9px;top:635px;width:101.2px;height:101.5px"></div>
<div class="t" style="left:1582.0px;top:668.5px;font-size:36.5px;color:#ffffff;">2</div>
</body></html>
